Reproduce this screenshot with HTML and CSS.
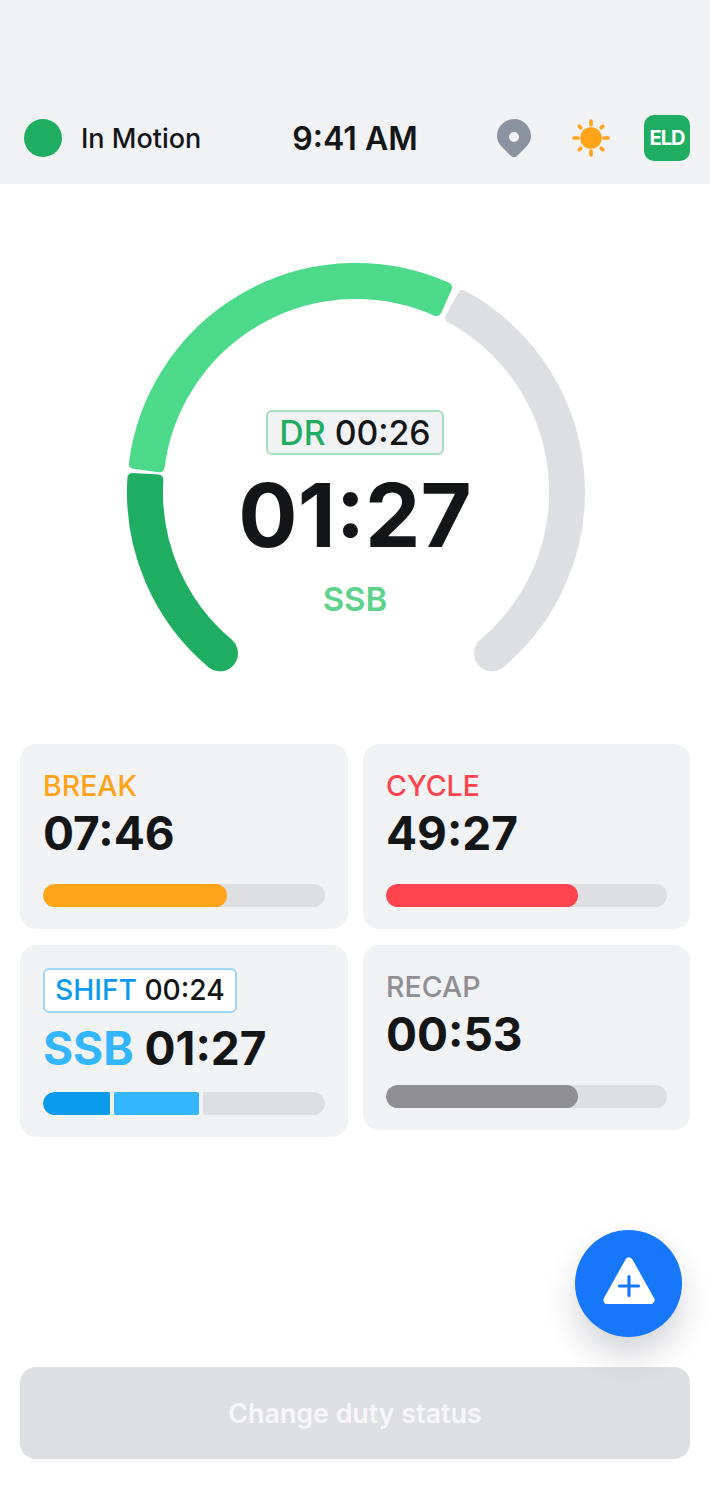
FILE: index.html
```html
<!DOCTYPE html>
<html lang="en">
<head>
    <meta charset="UTF-8">
    <meta name="viewport" content="width=device-width, initial-scale=1.0">
    <title>Duty status</title>
    <link rel="stylesheet" href="styles.css">
</head>
<body>
    <header class="topbar">
        <div class="status">
            <span class="status-dot"></span>
            <span class="status-text">In Motion</span>
        </div>
        <div class="clock">9:41 AM</div>
        <div class="topbar-icons">
            <svg class="pin-icon" width="34" height="39" viewBox="0 0 34 39">
                <path fill="#8b92a0" fill-rule="evenodd" d="M17 0C26.4 0 34 7.6 34 17C34 22 31.5 25.5 28.5 28.5L20 37Q17 39.5 14 37L5.5 28.5C2.5 25.5 0 22 0 17C0 7.6 7.6 0 17 0ZM17 13A5 5 0 1 0 17 23A5 5 0 1 0 17 13Z"/>
            </svg>
            <svg class="sun-icon" width="38" height="38" viewBox="0 0 38 38">
                <circle cx="19" cy="19" r="10.8" fill="#ffa318"/>
                <g stroke="#ffa318" stroke-width="3.6" stroke-linecap="round">
                    <path d="M19 2V6M19 32V36M2 19H6M32 19H36"/>
                    <path d="M7.2 7.2L8.8 8.8M29.2 29.2L30.8 30.8M7.2 30.8L8.8 29.2M29.2 8.8L30.8 7.2"/>
                </g>
            </svg>
            <div class="eld-badge">ELD</div>
        </div>
    </header>

    <section class="gauge">
        <svg class="gauge-ring" width="470" height="420" viewBox="120 256 470 420">
            <path class="seg-grey" d="M462.5 295A224 224 0 0 1 500 663.6A13 13 0 0 1 483.3 643.7A198 198 0 0 0 450.2 317.8Z"/>
            <path class="seg-light" d="M133.8 463.9A224 224 0 0 1 447.1 287.4L436.5 311.1A198 198 0 0 0 159.6 467.2Z"/>
            <path class="seg-dark" d="M132.4 477.9A224 224 0 0 0 212 663.6A13 13 0 0 0 228.7 643.7A198 198 0 0 1 158.4 479.6Z"/>
        </svg>
        <div class="gauge-center">
            <div class="chip chip-drive"><span class="chip-name">DR</span> 00:26</div>
            <div class="gauge-time">01:27</div>
            <div class="gauge-label">SSB</div>
        </div>
    </section>

    <section class="cards">
        <div class="card-col">
            <div class="card">
                <div class="card-label break">BREAK</div>
                <div class="card-value">07:46</div>
                <div class="track"><div class="fill fill-break" style="width: 65.2%"></div></div>
            </div>
            <div class="card">
                <div class="chip chip-shift"><span class="chip-name">SHIFT</span> 00:24</div>
                <div class="card-value card-value-ssb"><span class="ssb">SSB</span> 01:27</div>
                <div class="track track-split">
                    <div class="part part-dark" style="width: 67px"></div>
                    <div class="part part-light" style="width: 85.5px"></div>
                    <div class="part part-rest"></div>
                </div>
            </div>
        </div>
        <div class="card-col">
            <div class="card">
                <div class="card-label cycle">CYCLE</div>
                <div class="card-value">49:27</div>
                <div class="track"><div class="fill fill-cycle" style="width: 68.3%"></div></div>
            </div>
            <div class="card">
                <div class="card-label recap">RECAP</div>
                <div class="card-value">00:53</div>
                <div class="track"><div class="fill fill-recap" style="width: 68.3%"></div></div>
            </div>
        </div>
    </section>

    <div class="fab-row">
        <button class="fab" type="button" aria-label="Add">
            <svg class="fab-icon" width="52" height="47" viewBox="0 0 52 47">
                <path d="M26 4.5L47.5 43H4.5Z" fill="#fff" stroke="#fff" stroke-width="8" stroke-linejoin="round"/>
                <path d="M26 19.5V38.5M16.5 29H35.5" stroke="#1677fb" stroke-width="3.2" stroke-linecap="round"/>
            </svg>
        </button>
    </div>

    <div class="action">
        <button class="action-btn" type="button">Change duty status</button>
    </div>
</body>
</html>
```

FILE: styles.css
```css
body {
    margin: 0;
    background-color: #fff;
    color: #141517;
    font-family: "Inter", "Liberation Sans", sans-serif;
}

.topbar {
    display: grid;
    grid-template-columns: 1fr auto 1fr;
    align-items: center;
    height: 92px;
    padding: 92px 20px 0;
    background-color: #f1f2f4;
}
.status {
    display: flex;
    align-items: center;
    gap: 19px;
    margin-left: 4px;
}
.status-dot {
    width: 38px;
    height: 38px;
    border-radius: 50%;
    background-color: #1fad62;
}
.status-text {
    font-size: 27px;
    font-weight: 500;
}
.clock {
    font-size: 32px;
    font-weight: 600;
}
.topbar-icons {
    display: flex;
    align-items: center;
    justify-content: flex-end;
}
.pin-icon {
    margin-right: 41px;
}
.sun-icon {
    margin-right: 34px;
}
.eld-badge {
    width: 46px;
    height: 46px;
    border-radius: 10px;
    background-color: #1fad62;
    color: #fff;
    font-size: 20px;
    font-weight: 700;
    line-height: 46px;
    text-align: center;
    letter-spacing: -1px;
}

.gauge {
    display: grid;
    justify-content: center;
    margin-top: 72px;
}
.gauge-ring,
.gauge-center {
    grid-area: 1 / 1;
}
.gauge-center {
    display: flex;
    flex-direction: column;
    align-items: center;
    padding-top: 154px;
}
.seg-grey,
.seg-light,
.seg-dark {
    stroke-width: 10;
    stroke-linejoin: round;
}
.seg-grey {
    fill: #dedfe3;
    stroke: #dedfe3;
}
.seg-light {
    fill: #4cd98a;
    stroke: #4cd98a;
}
.seg-dark {
    fill: #1fad62;
    stroke: #1fad62;
}
.gauge-time {
    margin-top: 4px;
    font-size: 88px;
    font-weight: 700;
    line-height: 112px;
}
.gauge-label {
    margin-top: 8px;
    font-size: 33px;
    font-weight: 600;
    line-height: 40px;
    color: #5dd28c;
}

.chip {
    box-sizing: border-box;
    border-radius: 6px;
    font-weight: 500;
    white-space: nowrap;
}
.chip-drive {
    height: 45px;
    padding: 0 11px;
    border: 2px solid #a5dfbe;
    background-color: #f1f2f4;
    font-size: 33.8px;
    line-height: 41px;
}
.chip-drive .chip-name {
    color: #1fad62;
}
.chip-shift {
    align-self: flex-start;
    width: fit-content;
    height: 45px;
    padding: 0 10px;
    border: 2px solid #9ed8fa;
    background-color: #fff;
    font-size: 28.2px;
    line-height: 41px;
}
.chip-shift .chip-name {
    color: #0b9aec;
}

.cards {
    display: grid;
    grid-template-columns: 328px 327px;
    gap: 15px;
    margin: 68px 20px 0;
    align-items: start;
}
.card-col {
    display: flex;
    flex-direction: column;
    gap: 16px;
}
.card {
    padding: 23px 23px 22.5px;
    border-radius: 16px;
    background-color: #f1f2f4;
}
.card-label {
    font-size: 28.5px;
    font-weight: 500;
    line-height: 38px;
}
.break {
    color: #ffa318;
}
.cycle {
    color: #ff444f;
}
.recap {
    color: #8e8e93;
}
.card-value {
    margin-top: 4px;
    font-size: 46px;
    font-weight: 700;
    line-height: 48px;
}
.card-value-ssb {
    margin-top: 11px;
}
.ssb {
    color: #33b6ff;
}
.track {
    height: 22.5px;
    margin-top: 27px;
    border-radius: 12px;
    background-color: #dedfe3;
    overflow: hidden;
}
.fill {
    height: 100%;
    border-radius: 12px;
}
.fill-break {
    background-color: #ffa318;
}
.fill-cycle {
    background-color: #ff444f;
}
.fill-recap {
    background-color: #8e8e93;
}
.track-split {
    display: flex;
    gap: 3.5px;
    margin-top: 20px;
    background-color: transparent;
}
.part {
    border-radius: 2px;
}
.part-dark {
    border-radius: 12px 2px 2px 12px;
    background-color: #0b9aec;
}
.part-light {
    background-color: #33b6ff;
}
.part-rest {
    flex: 1;
    border-radius: 2px 12px 12px 2px;
    background-color: #dedfe3;
}

.fab-row {
    display: flex;
    justify-content: flex-end;
    margin-top: 93px;
    padding-right: 28px;
}
.fab {
    display: flex;
    align-items: center;
    justify-content: center;
    width: 107px;
    height: 107px;
    padding: 0;
    border: none;
    border-radius: 50%;
    background-color: #1677fb;
    box-shadow: 0 18px 32px rgba(40, 45, 60, 0.2);
}
.fab-icon {
    margin-bottom: 6px;
}

.action {
    margin: 30px 20px 0;
}
.action-btn {
    display: block;
    width: 100%;
    height: 92px;
    border: none;
    border-radius: 16px;
    background-color: #dedfe3;
    color: #f7f7f9;
    font-family: inherit;
    font-size: 26.8px;
    font-weight: 600;
}
```
